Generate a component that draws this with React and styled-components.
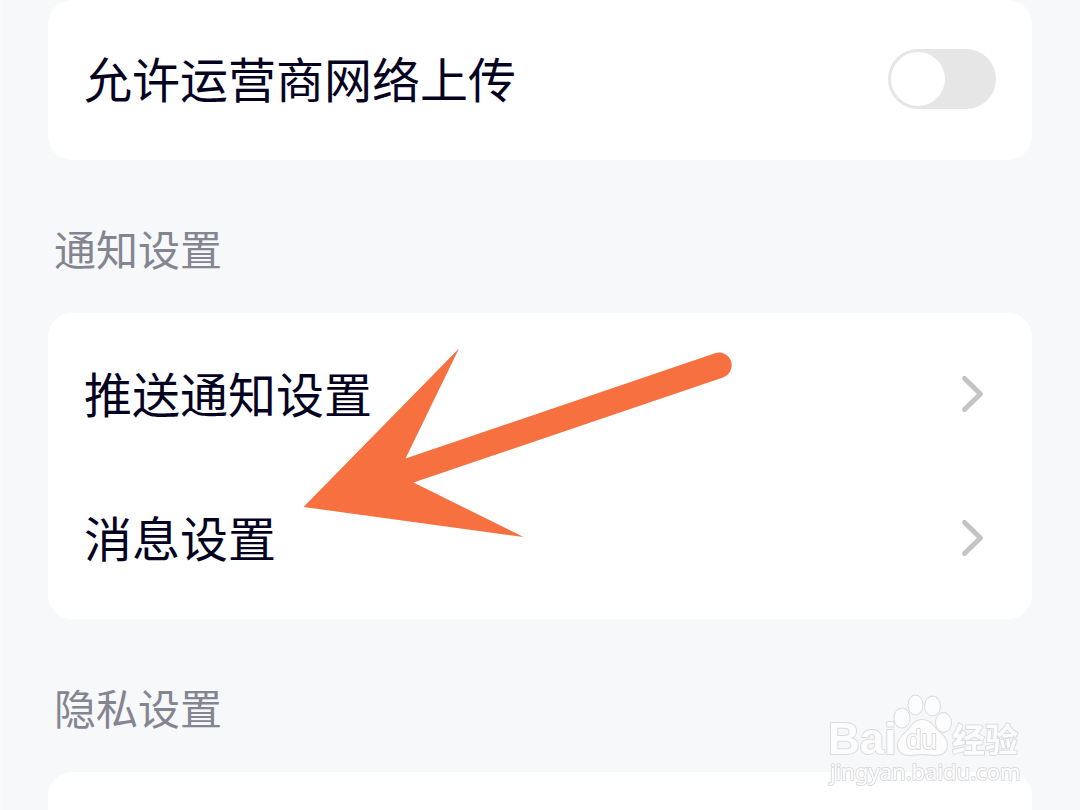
import React, { useState } from "react";
import styled, { createGlobalStyle, css } from "styled-components";

const GlobalStyle = createGlobalStyle`
  *, *::before, *::after { box-sizing: border-box; }
  body {
    margin: 0;
    background: #f6f8fa;
    font-family: "Noto Sans CJK SC", "Noto Sans", sans-serif;
  }
`;

const Page = styled.main`
  display: flex;
  flex-direction: column;
  min-height: 100vh;
  padding: 0 48px;
  background: #f6f8fa;
  box-shadow: inset 2px 0 0 #fafbfd;
`;

const Card = styled.section`
  position: relative;
  padding: ${(p) => p.$pad || "9px 0"};
  border-radius: 24px;
  background: #ffffff;
  ${(p) =>
    p.$continues &&
    css`
      flex: 1;
      border-radius: 24px 24px 0 0;
    `}
`;

const SectionTitle = styled.h2`
  margin: 0;
  padding: 56px 6px 34px;
  color: #858592;
  font-size: 42px;
  font-weight: 400;
  line-height: 63px;
`;

const rowStyle = css`
  display: flex;
  align-items: center;
  justify-content: space-between;
  width: 100%;
  min-height: 144px;
  padding: 0 36px;
  color: #05031f;
  font-size: 48px;
  font-weight: 400;
  line-height: 72px;
  text-decoration: none;
  cursor: pointer;
`;

const ToggleRow = styled.label`
  ${rowStyle}
`;

const LinkRow = styled.a`
  ${rowStyle}
`;

const RowLabel = styled.span`
  padding-bottom: 4px;
`;

const Switch = styled.input`
  appearance: none;
  flex: none;
  display: flex;
  align-items: center;
  width: 108px;
  height: 60px;
  margin: 0;
  padding: 3px;
  border-radius: 30px;
  background: #e6e6e6;
  cursor: pointer;

  &::before {
    content: "";
    width: 54px;
    height: 54px;
    border-radius: 50%;
    background: #ffffff;
  }

  &:checked {
    justify-content: flex-end;
    background: #3a7bff;
  }
`;

const ChevronIcon = styled.svg`
  flex: none;
  width: 48px;
  height: 48px;
  fill: none;
  stroke: #c4c4c4;
  stroke-width: 5;
  stroke-linecap: round;
  stroke-linejoin: round;
`;

const Pointer = styled.svg`
  position: absolute;
  top: 17px;
  left: 242px;
  width: 460px;
  height: 220px;
  fill: #f67040;
  pointer-events: none;
`;

const Watermark = styled.svg`
  position: fixed;
  right: 50px;
  bottom: 16px;
  width: 210px;
  height: 104px;
  fill: #fdfdfe;
  stroke: #dadbdd;
  stroke-width: 2;
  stroke-linejoin: round;
  paint-order: stroke;
  pointer-events: none;
`;

const Latin = styled.text`
  font: ${(p) => p.$weight} ${(p) => p.$size}px "Liberation Sans", sans-serif;
`;

const Han = styled.text`
  font: 700 33px "Noto Sans CJK SC", sans-serif;
`;

const Address = styled.text`
  font: 400 22px "Noto Sans", sans-serif;
`;

function Chevron() {
  return (
    <ChevronIcon viewBox="0 0 48 48" aria-hidden="true">
      <path d="M16.5 8.5 32.5 24 16.5 39.5" />
    </ChevronIcon>
  );
}

function SettingLink({ children }) {
  return (
    <LinkRow href="#">
      <RowLabel>{children}</RowLabel>
      <Chevron />
    </LinkRow>
  );
}

function BaiduMark() {
  return (
    <Watermark viewBox="820 690 210 104" aria-label="Baidu 经验">
      <Latin $size={44} $weight={700} x="828" y="754">Bai</Latin>
      <ellipse cx="902" cy="718" rx="7.5" ry="9.5" />
      <ellipse cx="915.5" cy="705" rx="7" ry="9.5" />
      <ellipse cx="932.5" cy="706" rx="7.5" ry="9.5" />
      <ellipse cx="943.5" cy="722.5" rx="7.5" ry="9.5" />
      <path d="M922 720c-7 0-10 5-14 10s-10 8-10 15c0 7 5 10 12 10 5 0 7-1 12-1s8 1 13 1c8 0 12-4 12-10 0-7-6-11-11-16-4-5-7-9-14-9Z" />
      <Latin $size={28} $weight={400} x="906" y="749">du</Latin>
      <Han x="952" y="752">经验</Han>
      <Address x="830" y="780">jingyan.baidu.com</Address>
    </Watermark>
  );
}

export default function App() {
  const [upload, setUpload] = useState(false);

  return (
    <>
      <GlobalStyle />
      <Page>
        <Card $pad="7px 0 9px">
          <ToggleRow>
            <RowLabel>允许运营商网络上传</RowLabel>
            <Switch
              type="checkbox"
              role="switch"
              checked={upload}
              onChange={(e) => setUpload(e.target.checked)}
            />
          </ToggleRow>
        </Card>

        <SectionTitle>通知设置</SectionTitle>
        <Card>
          <SettingLink>推送通知设置</SettingLink>
          <SettingLink>消息设置</SettingLink>
          <Pointer viewBox="290 330 460 220" aria-hidden="true">
            <path d="M303.5 507 459 348.5 405.5 458.5 715 353.3A12.6 12.6 0 0 1 723 377.4L413.5 482.5 523.5 537Z" />
          </Pointer>
        </Card>

        <SectionTitle>隐私设置</SectionTitle>
        <Card $continues />
      </Page>
      <BaiduMark />
    </>
  );
}
